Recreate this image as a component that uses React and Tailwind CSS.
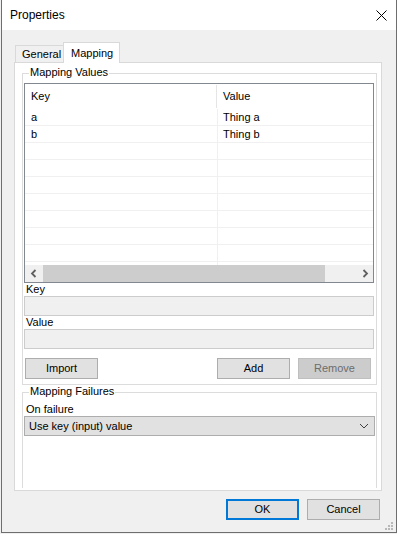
import React from 'react';

const rows = [
  { key: 'a', value: 'Thing a' },
  { key: 'b', value: 'Thing b' },
  { key: '', value: '' },
  { key: '', value: '' },
  { key: '', value: '' },
  { key: '', value: '' },
  { key: '', value: '' },
  { key: '', value: '' },
  { key: '', value: '' },
  { key: '', value: '' },
];

const Button = ({ children, disabled, primary, className = '' }) => (
  <div
    className={`w-[73px] h-[21px] flex items-center justify-center text-[11px] font-normal font-['Liberation_Sans',Arial,sans-serif] ${
      disabled
        ? 'bg-[#cccccc] border border-[#bfbfbf] text-[#6d6d6d]'
        : primary
        ? 'bg-[#e1e1e1] border-2 border-[#0078d7] text-black'
        : 'bg-[#e1e1e1] border border-[#adadad] text-black'
    } ${className}`}
  >
    <span>{children}</span>
  </div>
);

const GroupBox = ({ title, children, className = '' }) => (
  <div className={`relative border border-[#dcdcdc] ${className}`}>
    <span className="absolute left-[6px] -top-[8px] h-[13px] leading-[13px] px-px bg-white text-[11px] text-black">
      {title}
    </span>
    {children}
  </div>
);

const Chevron = ({ dir }) => (
  <svg width="8" height="9" viewBox="0 0 8 9">
    <path
      d={dir === 'left' ? 'M5.5 1 L2 4.5 L5.5 8' : 'M2.5 1 L6 4.5 L2.5 8'}
      fill="none"
      stroke="#606060"
      strokeWidth="1.8"
    />
  </svg>
);

const MappingList = () => (
  <div className="ml-px mt-[9px] w-[350px] h-[200px] border border-[#828790] bg-white flex flex-col overflow-hidden">
    <div className="h-[25px] shrink-0 flex text-[11px] text-black">
      <div className="w-[192px] border-r border-[#e5e5e5] my-px flex items-center pl-[6px]">Key</div>
      <div className="flex-1 flex items-center pl-[6px]">Value</div>
    </div>
    <div className="flex-1 overflow-hidden">
      {rows.map((row, i) => (
        <div key={i} className="h-[17px] flex border-b border-[#f0f0f0] text-[11px] text-black">
          <div className="w-[193px] border-r border-[#f0f0f0] flex items-center pl-[6px]">{row.key}</div>
          <div className="flex-1 flex items-center pl-[5px]">{row.value}</div>
        </div>
      ))}
    </div>
    <div className="h-[17px] shrink-0 flex bg-[#f0f0f0]">
      <div className="w-[17px] flex items-center justify-center">
        <Chevron dir="left" />
      </div>
      <div className="flex-1 flex items-stretch">
        <div className="ml-px w-[282px] bg-[#cdcdcd]" />
      </div>
      <div className="w-[17px] flex items-center justify-center">
        <Chevron dir="right" />
      </div>
    </div>
  </div>
);

const Grip = () => (
  <svg width="9" height="9" viewBox="0 0 9 9" className="absolute right-[2px] bottom-px">
    {[
      [6, 0],
      [3, 3],
      [6, 3],
      [0, 6],
      [3, 6],
      [6, 6],
    ].map(([x, y], i) => (
      <rect key={i} x={x} y={y} width="2" height="2" fill="#b8b8b8" />
    ))}
  </svg>
);

export default function App() {
  return (
    <div className="w-[397px] h-[534px] bg-[#f0f0f0] font-['Liberation_Sans',Arial,sans-serif]">
      <div className="relative ml-px w-[396px] h-[533px] border-x border-b border-[#6e6e6e] flex flex-col">
        {/* title bar */}
        <div className="h-[30px] shrink-0 bg-white flex items-center justify-between pl-[8px] pr-[8px]">
          <span className="text-[12px] text-black">Properties</span>
          <svg width="11" height="11" viewBox="0 0 11 11" className="mr-[1px]">
            <path d="M0.5 0.5 L10.5 10.5 M10.5 0.5 L0.5 10.5" stroke="#000" strokeWidth="1" fill="none" />
          </svg>
        </div>

        <div className="flex-1 flex flex-col">
          {/* tabs */}
          <div className="mt-[12px] ml-[13px] flex items-end h-[21px] -mb-px relative z-10">
            <div className="h-[18px] w-[48px] border-l border-t border-[#d9d9d9] flex items-center pl-[6px] text-[11px] text-black">
              General
            </div>
            <div className="h-[21px] w-[57px] border-x border-t border-[#d9d9d9] bg-white flex items-start pt-[2px] pl-[7px] text-[11px] text-black">
              Mapping
            </div>
          </div>

          {/* tab page */}
          <div className="ml-[12px] w-[368px] h-[429px] border border-[#d9d9d9] bg-white flex flex-col">
            <GroupBox title="Mapping Values" className="ml-[7px] mr-[4px] mt-[10px]">
              <MappingList />
              <div className="h-[13px] leading-[13px] pl-[3px] text-[11px] text-black">Key</div>
              <div className="ml-px w-[350px] h-[20px] bg-[#f0f0f0] border border-[#cccccc]" />
              <div className="h-[13px] leading-[13px] pl-[3px] text-[11px] text-black">Value</div>
              <div className="ml-px w-[350px] h-[20px] bg-[#f0f0f0] border border-[#cccccc]" />
              <div className="mt-[9px] mb-[5px] ml-[2px] mr-[5px] flex">
                <Button>Import</Button>
                <div className="flex-1" />
                <Button>Add</Button>
                <Button disabled className="ml-[8px]">Remove</Button>
              </div>
            </GroupBox>

            <GroupBox title="Mapping Failures" className="ml-[7px] mr-[4px] mt-[7px] mb-[2px] flex-1 border-b-0">
              <div className="mt-[10px] h-[13px] leading-[13px] pl-[3px] text-[11px] text-black">On failure</div>
              <div className="ml-px w-[351px] h-[20px] bg-[#e1e1e1] border border-[#adadad] flex items-center justify-between pl-[4px] pr-[5px] text-[11px] text-black">
                <span>Use key (input) value</span>
                <svg width="10" height="6" viewBox="0 0 10 6">
                  <path d="M1 1 L5 5 L9 1" fill="none" stroke="#404040" strokeWidth="1" />
                </svg>
              </div>
            </GroupBox>
          </div>

          {/* dialog buttons */}
          <div className="mt-[8px] mr-[16px] flex justify-end gap-[8px]">
            <Button primary>OK</Button>
            <Button>Cancel</Button>
          </div>
        </div>
        <Grip />
      </div>
    </div>
  );
}
